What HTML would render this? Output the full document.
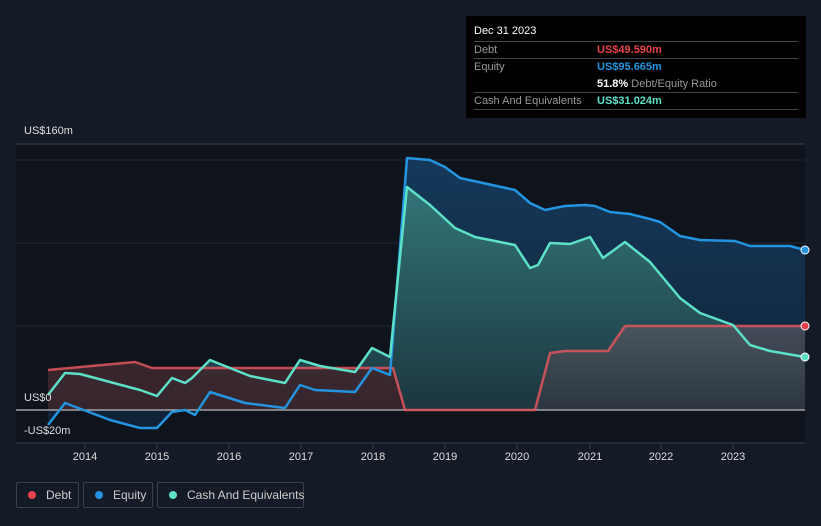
<!DOCTYPE html>
<html><head><meta charset="utf-8"><style>
html,body{margin:0;width:821px;height:526px;overflow:hidden}
body{background:#151b26;font-family:"Liberation Sans",sans-serif;position:relative}
.tt{position:absolute;left:466px;top:16px;width:340px;height:102px;background:#000;font-size:11px;color:#999}
.tt .r{position:absolute;left:8px;width:324px;border-top:1px solid #444;height:16px}
.lg{position:absolute;top:482px;height:26px;border:1px solid #3a404c;border-radius:2px;color:#ccc;font-size:12px;line-height:24px;box-sizing:border-box;white-space:nowrap}
.lg i{display:inline-block;width:8px;height:8px;border-radius:50%;margin:0 10px 0 11px;vertical-align:0}
.ax{position:absolute;color:#ddd;font-size:11px;white-space:nowrap}
</style></head><body>
<svg width="821" height="526" style="position:absolute;left:0;top:0">
<defs>
<linearGradient id="ge" x1="0" y1="0" x2="0" y2="1"><stop offset="0" stop-color="#15395a"/><stop offset="1" stop-color="#102236"/></linearGradient>
<linearGradient id="gc" x1="0" y1="0" x2="0" y2="1"><stop offset="0" stop-color="#327578"/><stop offset="1" stop-color="#1c3640"/></linearGradient>
<linearGradient id="gd" x1="0" y1="0" x2="0" y2="1"><stop offset="0" stop-color="#56565f"/><stop offset="1" stop-color="#323640"/></linearGradient>
</defs>
<rect x="16" y="144" width="789" height="299" fill="#0f131b"/>
<line x1="16" y1="144" x2="805" y2="144" stroke="#3a3f48"/>
<g stroke="#232832"><line x1="16" y1="160" x2="805" y2="160"/><line x1="16" y1="243" x2="805" y2="243"/><line x1="16" y1="326" x2="805" y2="326"/></g>
<path d="M48,425 L65,403 L110,420 L140,428 L157,428 L172,412 L185,410 L195,415 L210,392 L245,403 L285,408 L300,385 L315,390 L355,392 L372,368 L390,375 L407,158 L430,160 L445,167 L460,178 L515,190 L530,203 L545,210 L565,206 L585,205 L595,206 L610,212 L630,214 L650,219 L660,222 L680,236 L700,240 L735,241 L750,246 L790,246 L805,250 L805,410 L48,410Z" fill="url(#ge)"/>
<path d="M48,395 L65,373 L80,374 L110,382 L140,390 L157,396 L172,378 L185,383 L192,378 L210,360 L230,368 L250,376 L285,383 L300,360 L320,366 L355,372 L372,348 L390,357 L407,187 L430,205 L455,228 L475,237 L515,245 L530,268 L538,265 L550,243 L570,244 L590,237 L603,258 L625,242 L650,262 L680,298 L700,313 L733,325 L750,345 L770,351 L805,357 L805,410 L48,410Z" fill="url(#gc)"/>
<path d="M48,370 L135,362 L152,368 L300,368 L393,368 L405,410 L535,410 L550,353 L565,351 L608,351 L625,326 L805,326 L805,410 L48,410Z" fill="url(#gd)" opacity="0.75"/>
<path d="M48,370 L135,362 L152,368 L393,368 L405,410 L48,410Z" fill="#3a1e24" opacity="0.7"/>
<line x1="16" y1="410" x2="805" y2="410" stroke="#bbb" stroke-width="1.2"/>
<line x1="16" y1="443" x2="805" y2="443" stroke="#3a3f48"/>
<g stroke-width="2.5" fill="none" stroke-linejoin="round">
<path d="M48,370 L135,362 L152,368 L300,368 L393,368 L405,410 L535,410 L550,353 L565,351 L608,351 L625,326 L805,326" stroke="#e0555d" opacity="0.85"/>
<path d="M48,425 L65,403 L110,420 L140,428 L157,428 L172,412 L185,410 L195,415 L210,392 L245,403 L285,408 L300,385 L315,390 L355,392 L372,368 L390,375 L407,158 L430,160 L445,167 L460,178 L515,190 L530,203 L545,210 L565,206 L585,205 L595,206 L610,212 L630,214 L650,219 L660,222 L680,236 L700,240 L735,241 L750,246 L790,246 L805,250" stroke="#2394df"/>
<path d="M48,395 L65,373 L80,374 L110,382 L140,390 L157,396 L172,378 L185,383 L192,378 L210,360 L230,368 L250,376 L285,383 L300,360 L320,366 L355,372 L372,348 L390,357 L407,187 L430,205 L455,228 L475,237 L515,245 L530,268 L538,265 L550,243 L570,244 L590,237 L603,258 L625,242 L650,262 L680,298 L700,313 L733,325 L750,345 L770,351 L805,357" stroke="#5de0c8"/>
</g>
<circle cx="805" cy="250" r="4" fill="#2394df" stroke="#fff"/>
<circle cx="805" cy="326" r="4" fill="#e0404a" stroke="#fff"/>
<circle cx="805" cy="357" r="4" fill="#5de0c8" stroke="#fff"/>
<g stroke="#3a3f48"><line x1="85" y1="443" x2="85" y2="449"/><line x1="157" y1="443" x2="157" y2="449"/><line x1="229" y1="443" x2="229" y2="449"/><line x1="301" y1="443" x2="301" y2="449"/><line x1="373" y1="443" x2="373" y2="449"/><line x1="445" y1="443" x2="445" y2="449"/><line x1="517" y1="443" x2="517" y2="449"/><line x1="590" y1="443" x2="590" y2="449"/><line x1="661" y1="443" x2="661" y2="449"/><line x1="733" y1="443" x2="733" y2="449"/></g>
<g fill="#ddd" font-size="11" text-anchor="middle" font-family="Liberation Sans,sans-serif"><text x="85" y="460">2014</text><text x="157" y="460">2015</text><text x="229" y="460">2016</text><text x="301" y="460">2017</text><text x="373" y="460">2018</text><text x="445" y="460">2019</text><text x="517" y="460">2020</text><text x="590" y="460">2021</text><text x="661" y="460">2022</text><text x="733" y="460">2023</text></g>
</svg>
<div class="ax" style="left:24px;top:125px">US$160m</div>
<div class="ax" style="left:24px;top:392px">US$0</div>
<div class="ax" style="left:24px;top:425px">-US$20m</div>
<div class="tt">
<div style="position:absolute;left:8px;top:9px;color:#fff">Dec 31 2023</div>
<div class="r" style="top:25px"><span style="position:absolute;top:2px">Debt</span><b style="position:absolute;left:123px;top:2px;color:#e8424a">US$49.590m</b></div>
<div class="r" style="top:42px"><span style="position:absolute;top:2px">Equity</span><b style="position:absolute;left:123px;top:2px;color:#2394df">US$95.665m</b><span style="position:absolute;left:123px;top:19px;white-space:nowrap"><b style="color:#fff">51.8%</b> Debt/Equity Ratio</span></div>
<div class="r" style="top:76px"><span style="position:absolute;top:2px;white-space:nowrap">Cash And Equivalents</span><b style="position:absolute;left:123px;top:2px;color:#5de0c8">US$31.024m</b></div>
<div class="r" style="top:93px"></div>
</div>
<div class="lg" style="left:16px;width:63px"><i style="background:#e8424a"></i>Debt</div>
<div class="lg" style="left:83px;width:70px"><i style="background:#2394df"></i>Equity</div>
<div class="lg" style="left:157px;width:147px"><i style="background:#5de0c8"></i>Cash And Equivalents</div>
</body></html>
